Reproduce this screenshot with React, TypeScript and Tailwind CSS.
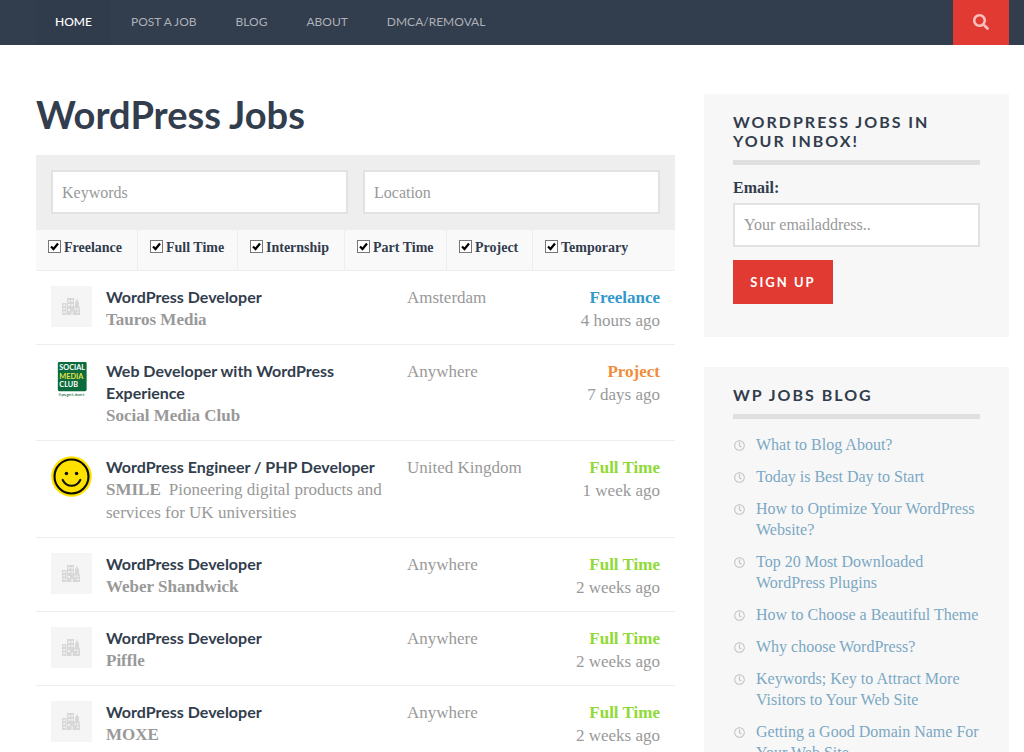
import { FaRegClock, FaSearch } from "react-icons/fa";

type Job = {
  title: string;
  company: string;
  tagline?: string;
  location: string;
  type: "Freelance" | "Project" | "Full Time";
  posted: string;
  logo?: "smc" | "smile";
};

const navItems = ["Home", "Post a Job", "Blog", "About", "DMCA/Removal"];

const jobTypes = ["Freelance", "Full Time", "Internship", "Part Time", "Project", "Temporary"];

const jobs: Job[] = [
  { title: "WordPress Developer", company: "Tauros Media", location: "Amsterdam", type: "Freelance", posted: "4 hours ago" },
  { title: "Web Developer with WordPress Experience", company: "Social Media Club", location: "Anywhere", type: "Project", posted: "7 days ago", logo: "smc" },
  { title: "WordPress Engineer / PHP Developer", company: "SMILE", tagline: "Pioneering digital products and services for UK universities", location: "United Kingdom", type: "Full Time", posted: "1 week ago", logo: "smile" },
  { title: "WordPress Developer", company: "Weber Shandwick", location: "Anywhere", type: "Full Time", posted: "2 weeks ago" },
  { title: "WordPress Developer", company: "Piffle", location: "Anywhere", type: "Full Time", posted: "2 weeks ago" },
  { title: "WordPress Developer", company: "MOXE", location: "Anywhere", type: "Full Time", posted: "2 weeks ago" },
];

const posts = [
  "What to Blog About?",
  "Today is Best Day to Start",
  "How to Optimize Your WordPress Website?",
  "Top 20 Most Downloaded WordPress Plugins",
  "How to Choose a Beautiful Theme",
  "Why choose WordPress?",
  "Keywords; Key to Attract More Visitors to Your Web Site",
  "Getting a Good Domain Name For Your Web Site",
];

const typeColors = {
  Freelance: "text-[#39c]",
  Project: "text-[#f08d3c]",
  "Full Time": "text-[#90da36]",
};

function CompanyLogo({ logo }: { logo?: "smc" | "smile" }) {
  if (logo === "smile") {
    return (
      <svg viewBox="0 0 42 42" className="size-[41px]" aria-hidden="true">
        <circle cx="21" cy="21" r="20.8" fill="#ffe100" />
        <circle cx="21" cy="21" r="17.4" fill="#ffe100" stroke="#0a0a00" strokeWidth="2.2" />
        <circle cx="15.8" cy="18" r="1.8" fill="#111" />
        <circle cx="26.2" cy="18" r="1.8" fill="#111" />
        <path d="M12 24.500c2 4 5 6 9 6s7-2 9-6" fill="none" stroke="#111" strokeWidth="2.200" strokeLinecap="round" />
      </svg>
    );
  }
  if (logo === "smc") {
    return (
      <svg viewBox="0 0 42 42" className="size-[41px]" aria-hidden="true">
        <rect x="7" y="2" width="29.500" height="30" rx="1.500" fill="#0b6b3c" />
        <g fontFamily="Lato, sans-serif" fontWeight="700" fontSize="7.500">
          <text x="8.500" y="10.500" fill="#fff">SOCIAL</text>
          <text x="8.500" y="19.500" fill="#e6e04a">MEDIA</text>
          <text x="8.500" y="28" fill="#fff">CLUB</text>
        </g>
        <text x="8" y="36.500" fill="#0b6b3c" fontFamily="Lato, sans-serif" fontWeight="700" fontSize="3">If you get it, share it</text>
      </svg>
    );
  }
  return (
    <svg viewBox="0 0 41 41" className="size-[41px]" aria-hidden="true">
      <rect width="41" height="41" fill="#f5f5f5" />
      <g fill="#d8d8d8">
        <path d="M11 17h4.500v12H11z" />
        <path d="M16 12h7v17h-7z" />
        <path d="M26 12l.8 3 1.200 1v4l1 2v7h-6v-8l1-1v-4l1.200-1z" />
      </g>
      <g fill="#f5f5f5">
        <path d="M12.200 18.500h2v1.500h-2zM12.200 22h2v1.500h-2zM12.200 25.500h2V27h-2z" />
        <path d="M17.200 14h1.800v1.800h-1.800zM20.200 14H22v1.800h-1.800zM17.200 18h1.800v1.800h-1.800zM20.200 18H22v1.800h-1.800zM17.200 23H19v2h-1.800zM23.500 22.500H25V24h-1.500zM26 22.500h1.500V24H26zM26 25.500h1.500V27H26zM20.500 25.500h1.200V29h-1.200z" />
      </g>
    </svg>
  );
}

function WidgetTitle({ children }: { children: string }) {
  return (
    <h2 className="border-b-[5px] border-[#dfdfdf] pb-[10px] font-[Lato,sans-serif] text-base/[19px] font-bold tracking-[2px] text-[#323c4d] uppercase">
      {children}
    </h2>
  );
}

export default function App() {
  return (
    <div className="min-h-screen bg-white font-['Liberation_Serif',serif] text-[#999]">
      <header className="flex h-[45px] bg-[#323d4d] pr-[15px] pl-9">
        <nav className="flex flex-1 font-[Lato,sans-serif] text-xs">
          {navItems.map((item, i) => (
            <a
              key={item}
              href="#"
              className={
                i === 0
                  ? "flex items-center bg-[#303b4b] px-[19px] pb-0.5 font-medium text-white uppercase"
                  : "flex items-center pr-[19px] pb-0.5 pl-5 text-[#adb1b8] uppercase"
              }
            >
              {item}
            </a>
          ))}
        </nav>
        <button type="button" aria-label="Search" className="grid w-14 place-items-center bg-[#e03a33] pb-0.5 text-[#f7c0bd]">
          <FaSearch className="size-4" />
        </button>
      </header>

      <div className="flex items-start gap-[29px] pt-[49px] pr-[15px] pl-9">
        <main className="min-w-0 flex-1">
          <h1 className="font-[Lato,sans-serif] text-[38px]/10 font-bold text-[#323d4d]">WordPress Jobs</h1>

          <form className="mt-[21px]">
            <div className="flex gap-[15px] bg-[#eee] p-[15px]">
              <input
                aria-label="Keywords"
                placeholder="Keywords"
                className="h-11 min-w-0 flex-1 border-2 border-[#e2e2e2] bg-white px-[9px] pt-0.5 text-base placeholder:text-[#999]"
              />
              <input
                aria-label="Location"
                placeholder="Location"
                className="h-11 min-w-0 flex-1 border-2 border-[#e2e2e2] bg-white px-[9px] pt-0.5 text-base placeholder:text-[#999]"
              />
            </div>
            <ul className="grid h-[42px] grid-cols-[102px_100px_107px_102px_86px_1fr] border-y border-[#eee] bg-[#f9f9f9]">
              {jobTypes.map((type) => (
                <li key={type} className="border-r border-[#eee] pt-2 pl-3 last:border-r-0">
                  <label className="flex items-center gap-[3px] text-sm/5 font-bold text-[#323c4d]">
                    <span className="grid size-[13px] -translate-y-0.5">
                      <input
                        type="checkbox"
                        defaultChecked
                        className="peer col-start-1 row-start-1 size-[13px] appearance-none border border-[#777] bg-white"
                      />
                      <svg
                        viewBox="0 0 13 13"
                        className="pointer-events-none invisible col-start-1 row-start-1 peer-checked:visible"
                        aria-hidden="true"
                      >
                        <path d="M3 6.500l2.500 2.500L10 3.500" fill="none" stroke="#000" strokeWidth="2.200" />
                      </svg>
                    </span>
                    {type}
                  </label>
                </li>
              ))}
            </ul>
          </form>

          <ul className="text-[17px]/[23px]">
            {jobs.map((job) => (
              <li key={job.company} className="border-b border-[#eee]">
                <a href="#" className="flex px-[15px] pt-[15px] pb-[13px]">
                  <div className="h-[41px] w-[55px] shrink-0">
                    <CompanyLogo logo={job.logo} />
                  </div>
                  <div className="min-w-0 flex-1 pr-4">
                    <h3 className="font-[Lato,sans-serif] text-base/[22px] font-bold text-[#323d4d]">{job.title}</h3>
                    <p>
                      <strong>{job.company}</strong>
                      {job.tagline && <span className="ml-2">{job.tagline}</span>}
                    </p>
                  </div>
                  <div className="w-[150px] leading-6">{job.location}</div>
                  <div className="w-[103px] text-right">
                    <p className={`leading-6 font-bold ${typeColors[job.type]}`}>{job.type}</p>
                    <p className="leading-[21px]">{job.posted}</p>
                  </div>
                </a>
              </li>
            ))}
          </ul>
        </main>

        <aside className="w-[305px] shrink-0">
          <section className="bg-[#f7f7f7] px-[29px] pt-[18px] pb-[33px]">
            <WidgetTitle>WordPress Jobs in Your Inbox!</WidgetTitle>
            <form className="pt-3">
              <label htmlFor="email" className="block text-base/[22px] font-bold text-[#323c4d]">
                Email:
              </label>
              <input
                id="email"
                type="email"
                placeholder="Your emailaddress.."
                className="mt-1 block h-11 w-full border-2 border-[#e2e2e2] bg-white px-[9px] text-base placeholder:text-[#999]"
              />
              <button
                type="submit"
                className="mt-[13px] block h-11 w-[100px] bg-[#e03a33] pt-0.5 font-[Lato,sans-serif] text-[13px] font-bold tracking-[2px] text-white uppercase"
              >
                Sign Up
              </button>
            </form>
          </section>

          <section className="mt-[30px] bg-[#f7f7f7] px-[29px] pt-[18px] pb-8">
            <WidgetTitle>WP Jobs Blog</WidgetTitle>
            <ul className="space-y-[11px] pt-[15px] text-base/[21px]">
              {posts.map((post) => (
                <li key={post} className="flex">
                  <FaRegClock className="mt-[6px] mr-[11px] ml-px size-[11px] shrink-0 text-[#c4c4c4]" />
                  <a href="#" className="text-[#7ba8c4]">
                    {post}
                  </a>
                </li>
              ))}
            </ul>
          </section>
        </aside>
      </div>
    </div>
  );
}
